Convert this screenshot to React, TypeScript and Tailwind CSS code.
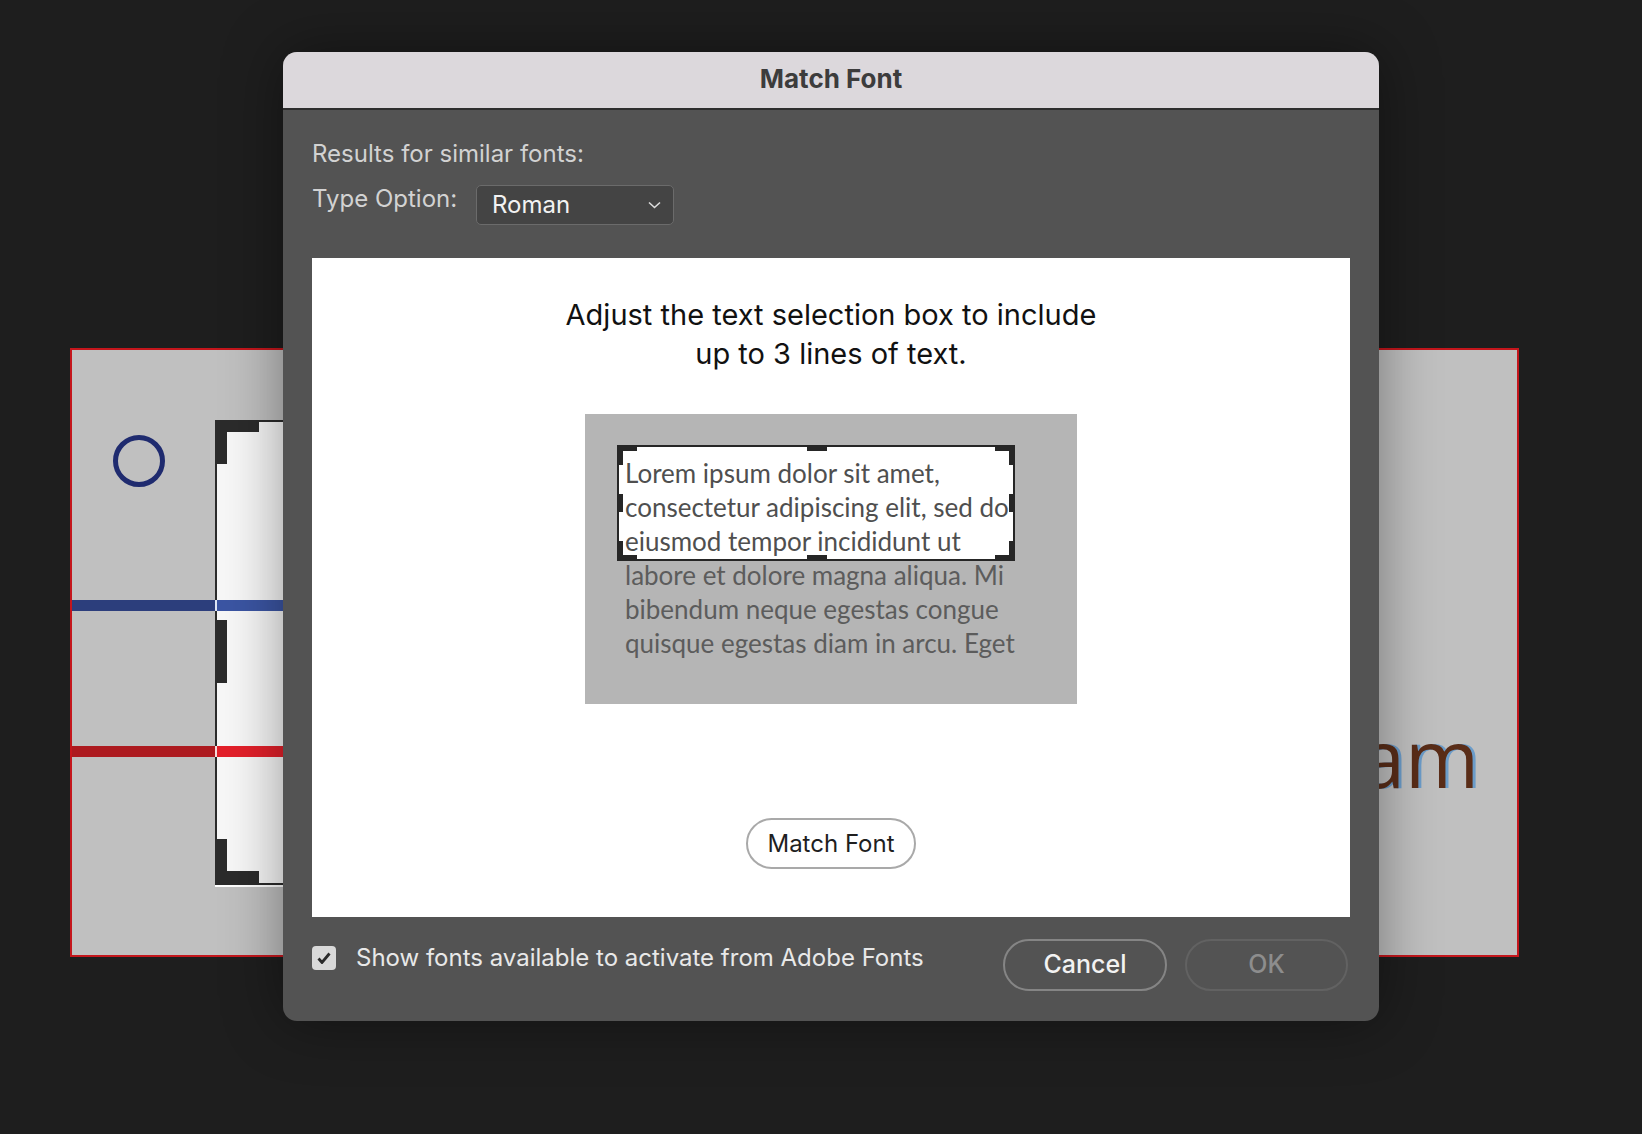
import React from "react";

const ui = { fontFamily: "Inter, 'Liberation Sans', sans-serif" };
const doc = { fontFamily: "Lato, 'Open Sans', sans-serif" };

const previewLines = [
  "Lorem ipsum dolor sit amet,",
  "consectetur adipiscing elit, sed do",
  "eiusmod tempor incididunt ut",
];
const previewRest = [
  "labore et dolore magna aliqua. Mi",
  "bibendum neque egestas congue",
  "quisque egestas diam in arcu. Eget",
];

function Handles() {
  const h = "absolute bg-[#262626]";
  return (
    <>
      <span className={`${h} -left-[2px] -top-[2px] h-[6px] w-[20px]`} />
      <span className={`${h} -left-[2px] -top-[2px] h-[20px] w-[6px]`} />
      <span className={`${h} -right-[2px] -top-[2px] h-[6px] w-[20px]`} />
      <span className={`${h} -right-[2px] -top-[2px] h-[20px] w-[6px]`} />
      <span className={`${h} -left-[2px] -bottom-[2px] h-[6px] w-[20px]`} />
      <span className={`${h} -left-[2px] -bottom-[2px] h-[20px] w-[6px]`} />
      <span className={`${h} -right-[2px] -bottom-[2px] h-[6px] w-[20px]`} />
      <span className={`${h} -right-[2px] -bottom-[2px] h-[20px] w-[6px]`} />
      <span className={`${h} left-[188px] -top-[2px] h-[6px] w-[20px]`} />
      <span className={`${h} left-[188px] -bottom-[2px] h-[6px] w-[20px]`} />
      <span className={`${h} -left-[2px] top-[47px] h-[18px] w-[6px]`} />
      <span className={`${h} -right-[2px] top-[47px] h-[18px] w-[6px]`} />
    </>
  );
}

function Canvas() {
  return (
    <div className="absolute left-[70px] top-[348px] h-[609px] w-[1449px] overflow-hidden border-2 border-[#c4161c] bg-[#c0c0c0]">
      <div className="absolute left-[41px] top-[85px] h-[52px] w-[52px] rounded-full border-[5px] border-[#1f2b6f]" />

      <div className="absolute left-[143px] top-[70px] h-[467px] w-[800px] border-b-2 border-white">
        <div className="h-full w-full border-l-2 border-t-2 border-b-2 border-[#2b2b2b] bg-[#f7f7f7]" />
        <span className="absolute left-0 top-0 h-[12px] w-[44px] bg-[#2b2b2b]" />
        <span className="absolute left-0 top-0 h-[44px] w-[12px] bg-[#2b2b2b]" />
        <span className="absolute left-0 top-[200px] h-[63px] w-[12px] bg-[#2b2b2b]" />
        <span className="absolute left-0 bottom-[2px] h-[12px] w-[44px] bg-[#2b2b2b]" />
        <span className="absolute left-0 bottom-[2px] h-[44px] w-[12px] bg-[#2b2b2b]" />
      </div>

      <div className="absolute left-0 top-[250px] flex h-[11px] w-[900px]">
        <div className="w-[143px] bg-[#2c3e7c]" />
        <div className="w-[2px] bg-[#dfe6f5]" />
        <div className="flex-1 bg-[#3b55a3]" />
      </div>
      <div className="absolute left-0 top-[396px] flex h-[11px] w-[900px]">
        <div className="w-[143px] bg-[#ad1a1f]" />
        <div className="w-[2px] bg-[#f6dada]" />
        <div className="flex-1 bg-[#e3202a]" />
      </div>

      <span
        className="absolute right-[38px] top-[367px] text-[80px] leading-none text-[#5a2d18] [text-shadow:3px_0_0_#6b9cc9]"
        style={{ fontFamily: "'Open Sans', sans-serif" }}
      >
        diam
      </span>
    </div>
  );
}

export default function App() {
  return (
    <div className="relative h-[1134px] w-[1642px] overflow-hidden bg-[#1e1e1e]" style={ui}>
      <Canvas />

      <div className="absolute left-[283px] top-[52px] flex h-[969px] w-[1096px] flex-col overflow-hidden rounded-[14px] bg-[#535353] shadow-[0_0_60px_rgba(0,0,0,0.4)]">
        <div className="flex h-[58px] shrink-0 items-center justify-center border-b-2 border-[#2e2e2e] bg-[#dcd8dc] pb-[3px]">
          <span className="text-[26px] font-bold text-[#3c3c3c]">Match Font</span>
        </div>

        <div className="flex flex-1 flex-col px-[29px] pt-[30px]">
          <p className="text-[24px] leading-[28px] text-[#d2d2d2]">Results for similar fonts:</p>

          <div className="mt-[17px] flex items-start">
            <span className="w-[164px] text-[24px] leading-[28px] text-[#d2d2d2]">Type Option:</span>
            <div className="flex h-[40px] w-[198px] items-center justify-between rounded-[5px] border border-[#6b6b6b] bg-[#444444] pl-[15px] pr-[12px]">
              <span className="text-[24px] text-[#f2f2f2]">Roman</span>
              <svg width="13" height="8" viewBox="0 0 13 8" fill="none">
                <path d="M1 1.5l5.5 5 5.5-5" stroke="#dcdcdc" strokeWidth="1.6" />
              </svg>
            </div>
          </div>

          <div className="mt-[33px] flex h-[659px] flex-col items-center bg-white pt-[37px]">
            <p className="text-center text-[29px] leading-[39px] text-[#111111]">
              Adjust the text selection box to include
              <br />
              up to 3 lines of text.
            </p>

            <div className="mt-[41px] flex h-[290px] w-[492px] flex-col bg-[#b5b5b5] pl-[32px] pt-[31px]" style={doc}>
              <div className="relative z-10 h-[116px] w-[398px] border-2 border-[#262626] bg-white pl-[6px] pt-[9px]">
                {previewLines.map((l) => (
                  <div key={l} className="text-[26px] leading-[34px] whitespace-nowrap text-[#4f4f4f]">
                    {l}
                  </div>
                ))}
                <Handles />
              </div>
              <div className="-mt-[3px] pl-[8px]">
                {previewRest.map((l) => (
                  <div key={l} className="text-[26px] leading-[34px] whitespace-nowrap text-[#5c5c5c]">
                    {l}
                  </div>
                ))}
              </div>
            </div>

            <button className="mt-[114px] flex h-[51px] w-[170px] items-center justify-center rounded-full border-2 border-[#a9a9a9] bg-white text-[24px] text-[#1f1f1f]">
              Match Font
            </button>
          </div>

          <div className="flex items-start justify-between">
            <label className="mt-[23px] flex items-center gap-[20px]">
              <span className="flex h-[24px] w-[24px] items-center justify-center rounded-[4px] bg-[#d9d9d9]">
                <svg width="14" height="12" viewBox="0 0 14 12" fill="none">
                  <path d="M1.5 6.5l3.5 4 7.5-9" stroke="#2b2b2b" strokeWidth="2.8" />
                </svg>
              </span>
              <span className="text-[24px] text-[#e8e8e8]">Show fonts available to activate from Adobe Fonts</span>
            </label>

            <div className="mt-[22px] mr-[2px] flex gap-[18px]">
              <button className="flex h-[52px] w-[164px] items-center justify-center rounded-full border-2 border-[#858585] text-[25px] font-medium text-[#f2f2f2]">
                Cancel
              </button>
              <button className="flex h-[52px] w-[163px] items-center justify-center rounded-full border-2 border-[#626262] text-[25px] font-medium text-[#8d8d8d]">
                OK
              </button>
            </div>
          </div>
        </div>
      </div>
    </div>
  );
}
